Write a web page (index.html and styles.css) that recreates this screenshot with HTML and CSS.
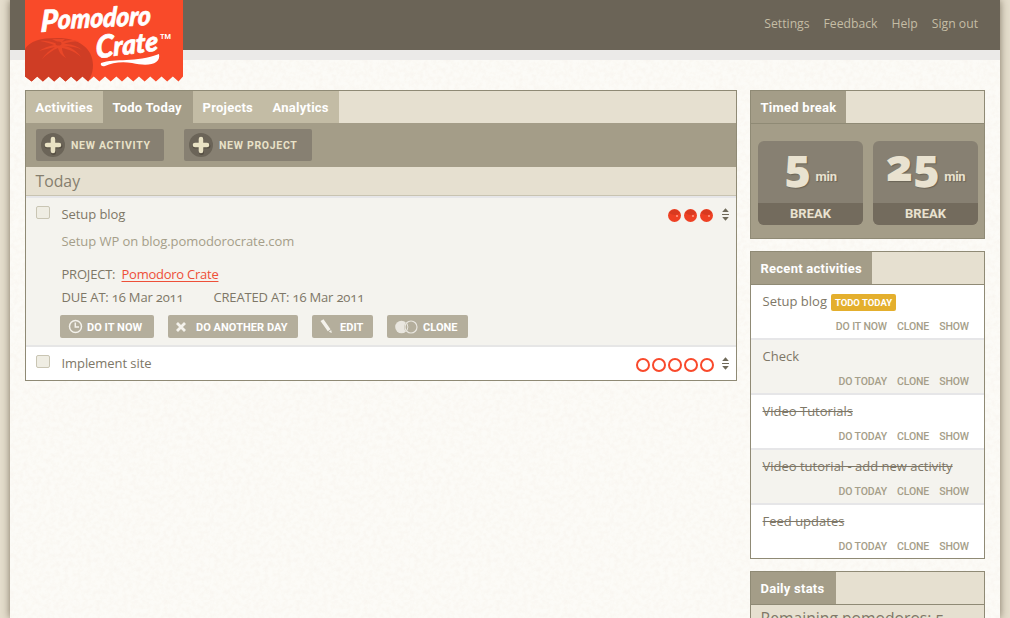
FILE: index.html
```html
<!DOCTYPE html>
<html lang="en">
<head>
<meta charset="utf-8">
<title>Pomodoro Crate</title>
<link rel="stylesheet" href="styles.css">
</head>
<body>
<svg class="defs" width="0" height="0">
  <symbol id="sort" viewBox="0 0 7 13"><path d="M3.500 .3L6.800 4H.2zM3.500 12.700L.2 9h6.600zM0 6h7v1H0z"/></symbol>
  <symbol id="plus" viewBox="0 0 24 24"><circle cx="12" cy="12" r="12" fill="#6b6458"/><path d="M12.5 6.5v13M6 13h13" stroke="#575044" stroke-width="5" stroke-linecap="round"/><path d="M12 6v12M6 12h12" stroke="#e9e2c4" stroke-width="4.6" stroke-linecap="round"/></symbol>
  <symbol id="full" viewBox="0 0 13 13"><circle cx="6.5" cy="6.5" r="6.5" fill="#ee4023"/><path d="M1 4a6.4 6.4 0 0 1 11 0q-5 4-11 0z" fill="#d83a20"/><circle cx="9" cy="7" r="1.1" fill="#ff9a85"/></symbol>
  <symbol id="empty" viewBox="0 0 14 14"><circle cx="7" cy="7" r="6" fill="#fff" stroke="#f9492b" stroke-width="2"/></symbol>
</svg>
<div class="page">
  <header class="top">
    <svg class="logo" width="158" height="82" viewBox="0 0 158 82">
      <path fill="#f94a29" d="M0 0H158V76.500L153.500 81.500L147.850 76.500L142.200 81.500L136.550 76.500L130.900 81.500L125.250 76.500L119.600 81.500L113.950 76.500L108.300 81.500L102.650 76.500L97 81.500L91.350 76.500L85.700 81.500L80.050 76.500L74.400 81.500L68.750 76.500L63.100 81.500L57.450 76.500L51.800 81.500L46.150 76.500L40.500 81.500L34.850 76.500L29.200 81.500L23.550 76.500L17.900 81.500L12.250 76.500L6.600 81.500L0 76.500z"/>
      <path fill="#cf3d25" d="M0 49C5 41 15 38 33 38C53 38 68 48 68 65C68 70 67 74 65 78L63.100 81.500L57.450 76.500L51.800 81.500L46.150 76.500L40.500 81.500L34.850 76.500L29.200 81.500L23.550 76.500L17.900 81.500L12.250 76.500L6.600 81.500L0 76.500z"/>
      <path fill="#ea4728" d="M30 43C26 42 20 40 15 41C20 42 25 43 29 45C24 46 18 48 14 51C20 49 26 48 30 47C25 50 20 54 17 59C22 54 28 50 33 48C34 52 36 55 41 58C38 54 37 51 37 48C43 49 51 52 56 57C52 51 46 47 39 46C45 46 52 47 57 50C51 45 45 44 39 44C43 42 49 41 55 42C49 39 42 40 37 42C38 41 39 40 40 39L27 39C29 40 31 41 33 42z"/>
      <ellipse cx="33.500" cy="43.500" rx="3" ry="2" fill="#cf3d25"/>
      <g fill="#fff" stroke="#fff" stroke-width=".7" stroke-linejoin="round" class="logo-type">
        <text transform="translate(15.500 32) rotate(-3.500) skewX(-6)" font-size="30" textLength="17" lengthAdjust="spacingAndGlyphs">P</text>
        <text transform="translate(32.500 29) rotate(-2.500) skewX(-6)" font-size="27" textLength="93" lengthAdjust="spacingAndGlyphs">omodoro</text>
        <text transform="translate(71 58.500) rotate(-7) skewX(-6)" font-size="31" textLength="18" lengthAdjust="spacingAndGlyphs">C</text>
        <text transform="translate(88.500 56) rotate(-7) skewX(-6)" font-size="27" textLength="45" lengthAdjust="spacingAndGlyphs">rate</text>
      </g>
      <text class="tm" fill="#fff" x="135" y="38.500" font-size="8" textLength="11" lengthAdjust="spacingAndGlyphs">TM</text>
      <path fill="#fff" d="M76 63C90 58 111 63 134 54C136 64 124 67 107 63C96 61 87 63 80 66C77 67 75 65 76 63z"/>
    </svg>
    <nav class="links"><a>Settings</a><a>Feedback</a><a>Help</a><a>Sign out</a></nav>
  </header>
  <div class="columns">
    <main class="panel main">
      <nav class="tabs"><a class="t1">Activities</a><a class="t2 on">Todo Today</a><a class="t3">Projects</a><a class="t4">Analytics</a></nav>
      <div class="toolbar">
        <a><svg width="24" height="24"><use href="#plus"/></svg><span>NEW ACTIVITY</span></a>
        <a><svg width="24" height="24"><use href="#plus"/></svg><span>NEW PROJECT</span></a>
      </div>
      <h2>Today</h2>
      <section class="task open">
        <i class="check"></i>
        <div class="body">
          <p class="name">Setup blog</p>
          <p class="desc">Setup WP on blog.pomodorocrate.com</p>
          <p class="project"><span>PROJECT:</span><a>Pomodoro Crate</a></p>
          <p class="dates"><span>DUE AT: 16 Mar 2011</span><span>CREATED AT: 16 Mar 2011</span></p>
          <div class="actions">
            <a class="b1"><svg width="15" height="15" viewBox="0 0 15 15" fill="none" stroke="#f4f2ec" stroke-width="1.500"><circle cx="7.500" cy="7.500" r="6"/><path d="M7.300 3.500V8H11"/></svg><span>DO IT NOW</span></a>
            <a class="b2"><svg width="10" height="10" viewBox="0 0 10 10" stroke="#f4f2ec" stroke-width="2.800"><path d="M1 1l8 8M9 1L1 9"/></svg><span>DO ANOTHER DAY</span></a>
            <a class="b3"><svg width="13" height="15" viewBox="0 0 13 15" fill="#f4f2ec"><path d="M.5 2L3.500 .3L10.500 10.200L7.800 12.200zM8.800 12.800l2.400-1.700l.6 2.900z"/></svg><span>EDIT</span></a>
            <a class="b4"><svg width="23" height="14" viewBox="0 0 23 14"><circle cx="6.500" cy="7" r="6.300" fill="#e9e6df"/><circle cx="16" cy="7" r="6.800" fill="#b4ae9c"/><circle cx="16" cy="7" r="6" fill="none" stroke="#e9e6df" stroke-width="1.200"/><path d="M12 3.500q1.800 3.500 0 7" fill="none" stroke="#e9e6df"/></svg><span>CLONE</span></a>
          </div>
        </div>
        <div class="poms"><svg width="13" height="13"><use href="#full"/></svg><svg width="13" height="13"><use href="#full"/></svg><svg width="13" height="13"><use href="#full"/></svg></div>
        <svg class="sort" width="7" height="13"><use href="#sort"/></svg>
      </section>
      <section class="task second">
        <i class="check"></i>
        <div class="body"><p class="name">Implement site</p></div>
        <div class="poms rings"><svg width="14" height="14"><use href="#empty"/></svg><svg width="14" height="14"><use href="#empty"/></svg><svg width="14" height="14"><use href="#empty"/></svg><svg width="14" height="14"><use href="#empty"/></svg><svg width="14" height="14"><use href="#empty"/></svg></div>
        <svg class="sort" width="7" height="13"><use href="#sort"/></svg>
      </section>
    </main>
    <aside>
      <section class="panel">
        <h3><span class="h1">Timed break</span></h3>
        <div class="breaks">
          <a><div class="num"><b>5</b><small>min</small></div><div class="brk">BREAK</div></a>
          <a><div class="num"><b>25</b><small>min</small></div><div class="brk">BREAK</div></a>
        </div>
      </section>
      <section class="panel">
        <h3><span class="h2">Recent activities</span></h3>
        <article><p>Setup blog<em>TODO TODAY</em></p><div><a>DO IT NOW</a><a>CLONE</a><a>SHOW</a></div></article>
        <article class="alt"><p>Check</p><div><a>DO TODAY</a><a>CLONE</a><a>SHOW</a></div></article>
        <article class="done"><p>Video Tutorials</p><div><a>DO TODAY</a><a>CLONE</a><a>SHOW</a></div></article>
        <article class="alt done"><p>Video tutorial - add new activity</p><div><a>DO TODAY</a><a>CLONE</a><a>SHOW</a></div></article>
        <article class="done"><p>Feed updates</p><div><a>DO TODAY</a><a>CLONE</a><a>SHOW</a></div></article>
      </section>
      <section class="panel stats">
        <h3><span class="h4">Daily stats</span></h3>
        <p class="remain">Remaining pomodoros: 5</p>
      </section>
    </aside>
  </div>
</div>
</body>
</html>
```
FILE: styles.css
```css
* { box-sizing: border-box; }
html, body { height: 618px; overflow: hidden; }
body { margin: 0; background: #e5decd; font-family: "Open Sans", "Noto Sans", sans-serif; font-size: 13px; color: #7e7767; font-variant-numeric: oldstyle-nums; }
p, h2, h3 { margin: 0; font-weight: 400; }
svg { display: block; flex: none; }
.defs { position: absolute; }
.page { width: 990px; height: 618px; margin: 0 10px; box-shadow: 0 0 8px rgba(70, 60, 40, .65); overflow: hidden;
  background: #fcfbf7 url("data:image/svg+xml,%3Csvg xmlns='http://www.w3.org/2000/svg' width='200' height='200'%3E%3Cfilter id='n'%3E%3CfeTurbulence type='fractalNoise' baseFrequency='.22' numOctaves='3' stitchTiles='stitch'/%3E%3CfeColorMatrix values='0 0 0 0 .75 0 0 0 0 .6 0 0 0 0 .45 .5 0 0 0 -.18'/%3E%3C/filter%3E%3Crect width='200' height='200' filter='url(%23n)' opacity='.4'/%3E%3C/svg%3E"); }
.top { height: 60px; background: #6b6457; border-bottom: 10px solid #ebeae8; display: flex; justify-content: space-between; padding: 0 22px 0 15px; }
.logo { position: relative; z-index: 1; }
.logo-type { font-family: Lato, sans-serif; font-weight: 900; font-style: italic; }
.tm { font-family: Roboto, sans-serif; font-weight: 700; }
.links { display: flex; gap: 14px; padding-top: 15px; line-height: 18px; font-size: 12.2px; color: #c5bda5; }
.columns { display: flex; align-items: flex-start; gap: 13px; padding: 30px 15px 0; }
.panel { border: 1px solid #8f8a75; background: #fff; }
.main { width: 712px; }
.tabs { display: flex; height: 32px; background: #e6e0d0; color: #fff; font: 700 13px/33px Roboto, sans-serif; letter-spacing: .25px; }
.tabs a { background: #c3bca5; padding-left: 9.5px; }
.tabs .on { background: #a49d88; }
.t1 { width: 77px; } .t2 { width: 90px; } .t3 { width: 70px; } .t4 { width: 76px; }
.toolbar { height: 44px; background: #a49d88; display: flex; gap: 20px; padding: 6px 10px; }
.toolbar a { width: 128px; height: 32px; background: #878072; border-radius: 2px; display: flex; align-items: center; padding-left: 5px; gap: 6px; color: #e9e2c8; font: 700 10.5px Roboto, sans-serif; letter-spacing: .7px; }
h2 { height: 29px; background: #e6e0d0; border-bottom: 1px solid #c8c3b1; padding-left: 9.5px; font-size: 15.8px; line-height: 28px; color: #857e6e; }
.task { display: flex; padding: 8px 7px 0 10px; }
.open { height: 151px; background: #f4f3ee; border-top: 2px solid #e6e6e8; border-bottom: 2px solid #e6e6e6; }
.second { height: 33px; }
.check { width: 14px; height: 13px; border: 1px solid #c9c5b3; border-radius: 2px; background: #efede3; margin-right: 11.5px; }
.body { flex: 1; line-height: 18px; letter-spacing: -.07px; margin-top: -1px; }
.desc { margin-top: 9px; color: #a59e89; }
.project { margin-top: 15px; display: flex; gap: 5px; }
.project span { width: 55px; letter-spacing: -.2px; white-space: nowrap; }
.project a { color: #ee4f38; text-decoration: underline; text-underline-offset: 2px; letter-spacing: -.25px; }
.dates { margin-top: 5px; display: flex; letter-spacing: -.17px; }
.dates span:first-child { width: 152px; }
.actions { display: flex; gap: 14px; margin: 9px 0 0 -1.5px; }
.actions a { height: 23px; background: #b4ae9c; color: #fff; border-radius: 2px; font: 700 11px Roboto, sans-serif; display: flex; align-items: center; letter-spacing: .05px; }
.actions span { padding-top: 1px; }
.b1 { width: 94px; padding-left: 8px; gap: 4px; }
.b2 { width: 130px; padding-left: 8px; gap: 10px; }
.b3 { width: 61px; padding-left: 8px; gap: 7px; }
.b4 { width: 81px; padding-left: 8px; gap: 5px; }
.poms { display: flex; gap: 3px; margin: 3px 9px 0 0; }
.rings { gap: 2px; margin-right: 8px; }
.sort { fill: #6f6959; margin-top: 2px; }
aside { width: 235px; display: grid; gap: 12px; }
h3 { height: 33px; border-bottom: 1px solid #8f8a75; background: #e6e0d0; display: flex; font: 700 13px/33px Roboto, sans-serif; letter-spacing: .25px; color: #fff; }
h3 span { height: 32px; background: #a49d88; padding-left: 9.5px; }
.h1 { width: 95px; } .h2 { width: 121px; } .h4 { width: 85px; }
.breaks { height: 114px; background: #a49d88; padding: 17px 6px 0 7px; display: flex; justify-content: space-between; }
.breaks a { width: 105px; height: 84px; background: #878072; border-radius: 6px; color: #e9e2d0; font-weight: 700; }
.num { height: 62px; display: flex; justify-content: center; align-items: baseline; line-height: 46px; text-shadow: 1px 1px 1px #6b6457; }
.num b { font-size: 45px; }
.num small { font: 700 13px Roboto, sans-serif; margin-left: 4px; letter-spacing: -.3px; }
.brk { height: 22px; font: 700 13px/21px Roboto, sans-serif; background: #736b5d; text-align: center; border-radius: 0 0 6px 6px; }
article { height: 55px; border-bottom: 2px solid #e6e6e8; padding: 7px 15px 0 11.5px; line-height: 18px; }
article:last-child { height: 53px; border: 0; }
article p { height: 18px; display: flex; }
article em { font: 700 9.5px/17px Roboto, sans-serif; height: 17px; width: 65px; text-align: center; background: #e4af2d; color: #fff; border-radius: 2px; margin: 2px 0 0 4px; }
article div { display: flex; justify-content: flex-end; gap: 10px; font: 500 10.5px/18px Roboto, sans-serif; letter-spacing: -.12px; color: #a59e89; padding-top: 8px; }
.alt { background: #f4f3ee; }
.done p { text-decoration: line-through; }
.stats { background: #e6e0d0; }
.remain { font-size: 15.7px; line-height: 26px; padding-left: 9.5px; white-space: nowrap; }
```
